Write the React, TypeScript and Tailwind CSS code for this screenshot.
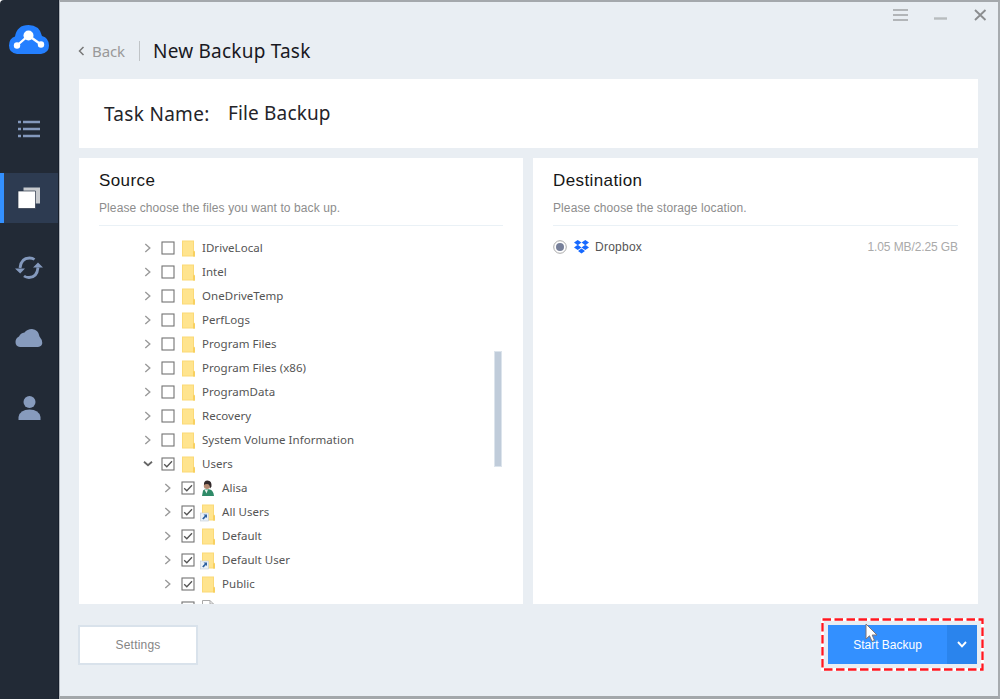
import type { ReactNode } from 'react';

type EntryKind = 'folder' | 'shortcut' | 'user' | 'file';

interface TreeEntry {
  name: string;
  kind: EntryKind;
  checked?: boolean;
  expanded?: boolean;
  nested?: boolean;
}

const entries: TreeEntry[] = [
  { name: 'IDriveLocal', kind: 'folder' },
  { name: 'Intel', kind: 'folder' },
  { name: 'OneDriveTemp', kind: 'folder' },
  { name: 'PerfLogs', kind: 'folder' },
  { name: 'Program Files', kind: 'folder' },
  { name: 'Program Files (x86)', kind: 'folder' },
  { name: 'ProgramData', kind: 'folder' },
  { name: 'Recovery', kind: 'folder' },
  { name: 'System Volume Information', kind: 'folder' },
  { name: 'Users', kind: 'folder', checked: true, expanded: true },
  { name: 'Alisa', kind: 'user', checked: true, nested: true },
  { name: 'All Users', kind: 'shortcut', checked: true, nested: true },
  { name: 'Default', kind: 'folder', checked: true, nested: true },
  { name: 'Default User', kind: 'shortcut', checked: true, nested: true },
  { name: 'Public', kind: 'folder', checked: true, nested: true },
];

const EntryIcon = ({ kind }: { kind: EntryKind }) => {
  if (kind === 'user') {
    return (
      <svg width="14" height="17" viewBox="0 0 14 17">
        <path d="M1 16 L2 10.5 Q3 9 5.5 9 L9 9.5 Q12.5 10.5 13 16 Z" fill="#2f8a68" />
        <path d="M3.5 9.500 L5.500 13.500 L7 9.500 Z" fill="#e8efec" />
        <circle cx="6" cy="5.700" r="3.2" fill="#b48a72" />
        <path d="M3 5 Q2.5 .5 6.5 .5 Q11 .5 10.500 6.500 L9 8.500 Q9 4 6 4 Q4 4 3 5 Z" fill="#33292a" />
      </svg>
    );
  }
  if (kind === 'file') {
    return (
      <svg width="14" height="17" viewBox="0 0 14 17">
        <path d="M1.5 .5 H9 L12.5 4 V16.5 H1.5 Z M9 .5 V4 H12.5" fill="#fff" stroke="#a9a9a9" />
      </svg>
    );
  }
  return (
    <svg width="14" height="17" viewBox="0 0 14 17" overflow="visible">
      <path d="M1 .5 H13 V10.5 L14 11.5 V16.5 H1 Z" fill="#fbd976" />
      <path d="M2 1.5 H12 V15.5 H2 Z" fill="#ffe48e" />
      <path d="M12 11 L14 12 V16.5 H12 Z" fill="#f8d05f" />
      {kind === 'shortcut' && (
        <>
          <rect x="-.5" y="9" width="8" height="8" fill="#e9f0f7" stroke="#c3ccd6" strokeWidth=".6" />
          <path d="M2.5 10.5 H6 V14 L4.9 12.9 L2.5 15.6 L1.2 14.5 L3.8 11.8 Z" fill="#2c5f9e" />
        </>
      )}
    </svg>
  );
};

const Checkbox = ({ checked }: { checked?: boolean }) => (
  <svg width="14" height="14" viewBox="0 0 14 14" fill="none">
    <rect x="1" y="1" width="12" height="12" fill="#fff" stroke="#737373" strokeWidth="1.1" />
    {checked && <path d="M3.2 7.2 L5.8 9.8 L11 4.2" stroke="#555" strokeWidth="1.3" />}
  </svg>
);

const TreeRow = ({ entry }: { entry: TreeEntry }) => (
  <div className={`flex h-6 items-center ${entry.nested ? 'pl-[84px]' : 'pl-[64px]'}`}>
    <svg width="10" height="10" viewBox="0 0 10 10" fill="none" strokeWidth="1.4">
      {entry.expanded ? (
        <path d="M1 2.8 L5 6.2 L9 2.8" stroke="#666" strokeWidth="1.8" />
      ) : (
        <path d="M2.3 1 L6.8 5 L2.3 9" stroke="#9a9a9a" />
      )}
    </svg>
    <div className="ml-2">
      <Checkbox checked={entry.checked} />
    </div>
    <div className="ml-1.5">
      <EntryIcon kind={entry.kind} />
    </div>
    <span className="ml-[7px] whitespace-nowrap font-['Noto_Sans',sans-serif] text-[11.5px] tracking-[0.04px] text-[#555]">
      {entry.name}
    </span>
  </div>
);

interface PanelProps {
  title: string;
  hint: string;
  className: string;
  children: ReactNode;
}

const Panel = ({ title, hint, className, children }: PanelProps) => (
  <section className={`flex h-[446px] flex-col overflow-hidden bg-white px-5 pt-3 ${className}`}>
    <h2 className="h-[22px] text-[17px] leading-[22px] tracking-[0.4px] text-[#161616]">{title}</h2>
    <p className="mt-2 h-4 text-[12px] leading-4 tracking-[0.1px] text-[#8d8d8d]">{hint}</p>
    <div className="mt-[9px] h-px shrink-0 bg-[#eaf1f6]" />
    {children}
  </section>
);

const Sidebar = () => (
  <aside className="flex w-[59px] shrink-0 flex-col rounded-tl-[4px] border-r border-[#171f2c] bg-[#222a36]">
    <div className="flex h-[103px] justify-center pt-6">
      <svg width="42" height="31" viewBox="0 0 42 31" fill="none">
        <path d="M9 30 Q1 29 1 21.5 Q1 14.5 7 12.5 Q9 1 20.5 1 Q31.5 1 34 12 Q41 14 41 21.5 Q41 29 33 30 Z" fill="#247fff" />
        <path d="M9 21.5 L20.5 11.5 L33 20.5" stroke="#fff" strokeWidth="2.3" />
        <circle cx="20.5" cy="11.5" r="5" fill="#fff" />
        <circle cx="9" cy="21.5" r="3.2" fill="#fff" />
        <circle cx="33" cy="20.5" r="3.2" fill="#fff" />
      </svg>
    </div>
    <div className="flex h-[50px] items-center justify-center pt-0.5">
      <svg width="24" height="20" viewBox="0 0 24 20" stroke="#8499bd" strokeWidth="2.6">
        <path d="M1 3 H4 M6 3 H23 M1 10 H4 M6 10 H23 M1 17 H4 M6 17 H23" />
      </svg>
    </div>
    <div className="mt-5 flex h-[50px] items-center justify-center border-l-4 border-[#3390ff] bg-[#2d3b51] pr-1">
      <svg width="24" height="24" viewBox="0 0 24 24">
        <path d="M6.5 1.5 H23 V17.5 H6.5 Z" fill="#c7cace" />
        <path d="M1 5 H18.5 V22.5 H1 Z" fill="#fff" stroke="#293346" strokeWidth=".7" />
      </svg>
    </div>
    <div className="mt-5 flex h-[50px] items-center justify-center">
      <svg width="28" height="24" viewBox="0 0 28 24" fill="none">
        <path d="M5 12 Q6 2 14.5 2 Q17.5 2 19.5 3.5 M23 11.5 Q22 21.5 14 21.5 Q11 21.5 9 20" stroke="#8499bd" strokeWidth="2.8" />
        <path d="M0 12.5 H10 L5.2 17.5 Z M18 11.5 H28 L23 6.5 Z" fill="#8499bd" />
      </svg>
    </div>
    <div className="mt-5 flex h-[50px] items-center justify-center">
      <svg width="28" height="20" viewBox="0 0 28 20">
        <path d="M5 19 Q.5 18.5 .5 14 Q.5 10 4 8.5 Q5.500 5 9.5 4.500 Q12 1 17 1 Q23.5 1.5 24.500 8.5 Q27.5 12 27.3 15 Q27 18.5 23 19 Z" fill="#879bbd" />
      </svg>
    </div>
    <div className="mt-5 flex h-[50px] items-center justify-center">
      <svg width="24" height="26" viewBox="0 0 24 26" fill="#879bbd">
        <circle cx="12.5" cy="7" r="6" />
        <path d="M1.5 25 V22 Q3 14.5 12.5 14.5 Q22 14.5 23.5 22 V25 Z" />
      </svg>
    </div>
  </aside>
);

const Dropbox = () => (
  <svg width="15" height="14" viewBox="0 0 15 14" fill="#1769ff">
    <path d="M3.7 0 L7.5 2.6 L3.7 5.2 L0 2.6 Z M11.3 0 L15 2.6 L11.3 5.2 L7.5 2.6 Z M3.7 4.800 L7.5 7.4 L3.7 10 L0 7.4 Z M11.3 4.800 L15 7.4 L11.3 10 L7.5 7.4 Z M7.5 8.5 L11 10.9 L7.5 13.5 L4 10.9 Z" />
  </svg>
);

const App = () => (
  <div className="flex h-[699px] w-[1000px] overflow-hidden bg-white font-['Liberation_Sans',sans-serif]">
    <Sidebar />
    <main className="relative flex h-full flex-1 flex-col border-t-2 border-r-2 border-b-3 border-l border-t-[#a4a8ac] border-r-[#a7abaf] border-b-[#a3a7aa] border-l-[#b2b7be] bg-[#e9eef3] pr-5 pl-[19px]">
      {/* Window controls */}
      <div className="absolute top-1 right-[10px]">
        <svg width="98" height="18" viewBox="0 0 98 18" fill="none">
          <path d="M3 4 H18 M3 9 H18 M3 14 H18" stroke="#a0a3a5" strokeWidth="1.7" />
          <path d="M44 12.5 H57" stroke="#b8bcbe" strokeWidth="2.4" />
          <path d="M85 4 L95.5 14 M95.5 4 L85 14" stroke="#8b8d8f" strokeWidth="1.9" />
        </svg>
      </div>

      <header className="flex h-[77px] items-center pt-[21px] font-['Noto_Sans',sans-serif]">
        <svg className="-ml-px" width="7" height="10" viewBox="0 0 7 10" fill="none">
          <path d="M5.5 1 L1.5 5 L5.5 9" stroke="#777" strokeWidth="1.5" />
        </svg>
        <span className="ml-[7px] w-[47px] text-[15px] tracking-[-0.1px] text-[#999]">Back</span>
        <div className="h-5 w-px bg-[#c0c4c7]" />
        <h1 className="ml-[13px] text-[19px] tracking-[0.22px] whitespace-nowrap text-[#19191f]">New Backup Task</h1>
      </header>

      <div className="flex h-[69px] shrink-0 items-center bg-white pl-[25px] font-['Noto_Sans',sans-serif] whitespace-nowrap text-[#242429]">
        <span className="w-[124px] pt-px text-[19px] tracking-[0.3px]">Task Name:</span>
        <span className="text-[19px] tracking-[0.15px]">File Backup</span>
      </div>

      <div className="mt-2.5 flex gap-2.5">
        <Panel title="Source" hint="Please choose the files you want to back up." className="w-[444px] shrink-0">
          <div className="relative -mr-5 -ml-1 h-[379px] overflow-hidden pt-[10px]">
            <div className="-ml-[16px]">
              {entries.map((entry) => (
                <TreeRow key={entry.name} entry={entry} />
              ))}
              {/* Next row, cut off by the panel's edge */}
              <div className="flex h-6 items-center pl-[102px]">
                <Checkbox checked />
                <div className="ml-1.5">
                  <EntryIcon kind="file" />
                </div>
              </div>
            </div>
            <div className="absolute top-[125px] right-[21px] h-[116px] w-2 border border-[#dce4ec] bg-[#c0ccda]" />
          </div>
        </Panel>
        <Panel title="Destination" hint="Please choose the storage location." className="flex-1">
          <div className="mt-[9px] flex h-6 items-center text-[12px]">
            <svg width="14" height="14" viewBox="0 0 14 14">
              <circle cx="7" cy="7" r="6.3" fill="#fff" stroke="#aaa" />
              <circle cx="7" cy="7" r="4" fill="#77809a" />
            </svg>
            <div className="ml-[7px]">
              <Dropbox />
            </div>
            <span className="ml-[6px] tracking-[0.25px] text-[#555]">Dropbox</span>
            <span className="ml-auto tracking-[-0.1px] text-[#aaa]">1.05 MB/2.25 GB</span>
          </div>
        </Panel>
      </div>

      <footer className="-mr-[6px] -ml-px mt-[14px] flex items-start justify-between">
        <button className="mt-[7px] h-10 w-[120px] border-2 border-[#d9e2eb] bg-white text-[12px] tracking-[0.2px] text-[#858585]">
          Settings
        </button>
        <div className="relative h-[53px] w-[163px] p-[7px]">
          {/* Dashed highlight round the button */}
          <svg className="absolute inset-0" width="163" height="53" fill="none">
            <rect x="1.5" y="1.5" width="160" height="50" stroke="#fff" strokeWidth="3" />
            <rect x="1.5" y="1.5" width="160" height="50" stroke="#ff1720" strokeWidth="2.3" strokeDasharray="8.5 3.5" />
          </svg>
          <div className="relative flex h-[39px] w-[149px] text-[12px] text-white">
            <button className="w-[119px] bg-[#3390ff]">Start Backup</button>
            <button className="flex flex-1 items-center justify-center bg-[#2a84ed]">
              <svg width="10" height="7" viewBox="0 0 10 7" fill="none">
                <path d="M1 1 L5 5.3 L9 1" stroke="#fff" strokeWidth="1.9" />
              </svg>
            </button>
          </div>
          <svg className="absolute top-[5px] left-[44px]" width="13" height="20" viewBox="0 0 13 20">
            <path d="M1 1 V16 L4.5 12.8 L7 18.5 L9.5 17.4 L7.2 12 H12 Z" fill="#fff" stroke="#7e7478" strokeWidth="1" />
          </svg>
        </div>
      </footer>
    </main>
  </div>
);

export default App;
